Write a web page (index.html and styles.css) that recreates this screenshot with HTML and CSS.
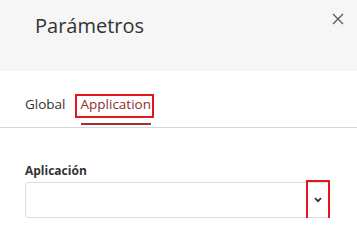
FILE: index.html
```html
<!DOCTYPE html>
<html lang="es">
<head>
<meta charset="utf-8">
<link rel="stylesheet" href="styles.css">
</head>
<body>
<div class="dialog">
  <header class="header">
    <h1 class="title">Parámetros</h1>
    <button class="close" aria-label="Cerrar">
      <svg width="12" height="12" viewBox="0 0 12 12"><path d="M1 1L11 11M11 1L1 11" stroke="#555" stroke-width="1.2" fill="none"/></svg>
    </button>
  </header>
  <nav class="tabs">
    <span class="tab">Global</span>
    <span class="tab active"><span class="mark">Application</span></span>
  </nav>
  <section class="body">
    <label class="label">Aplicación</label>
    <div class="select">
      <span class="arrow">
        <svg width="8" height="6" viewBox="0 0 8 6"><path d="M1 1.2L4 4.2L7 1.2" stroke="#333" stroke-width="1.8" fill="none"/></svg>
      </span>
    </div>
  </section>
</div>
</body>
</html>
```
FILE: styles.css
```css
* { box-sizing: border-box; }
html, body { margin: 0; padding: 0; background: #fff; }
body { font-family: "Open Sans", "Liberation Sans", sans-serif; color: #333; }
.dialog { width: 357px; }
.header {
  height: 71px;
  background: #f6f6f6;
  display: flex;
  align-items: flex-start;
  justify-content: space-between;
  padding: 12px 13px 0 35px;
}
.title {
  margin: 0;
  font-size: 20px;
  font-weight: 400;
  line-height: 28px;
  color: #333;
}
.close {
  border: 0;
  background: transparent;
  padding: 0;
  margin-top: 1px;
  width: 12px;
  height: 12px;
  display: flex;
}
.tabs {
  display: flex;
  gap: 15px;
  padding: 23px 25px 0;
  border-bottom: 1px solid #d6d6d6;
  height: 57px;
}
.tab {
  font-size: 13.5px;
  line-height: 20px;
  color: #333;
  height: 31px;
}
.tab.active {
  color: #8c2f2f;
  border-bottom: 2px solid #9a3434;
}
.mark { position: relative; display: inline-block; }
.mark::after {
  content: "";
  position: absolute;
  left: -6px; right: -3px; top: 0; bottom: -4px;
  border: 2px solid #e3171f;
}
.body { padding: 35px 27px 0 25px; }
.label {
  display: block;
  font-size: 12px;
  font-weight: 700;
  line-height: 16px;
  color: #333;
  margin-bottom: 3px;
}
.select {
  height: 36px;
  border: 1px solid #dcdcdc;
  border-radius: 3px;
  display: flex;
  justify-content: flex-end;
  align-items: center;
}
.arrow {
  position: relative;
  width: 22px;
  height: 100%;
  display: flex;
  align-items: center;
  justify-content: center;
}
.arrow::after {
  content: "";
  position: absolute;
  left: -1px; right: -1px; top: -3px; bottom: -3px;
  border: 2px solid #e3171f;
}
```
